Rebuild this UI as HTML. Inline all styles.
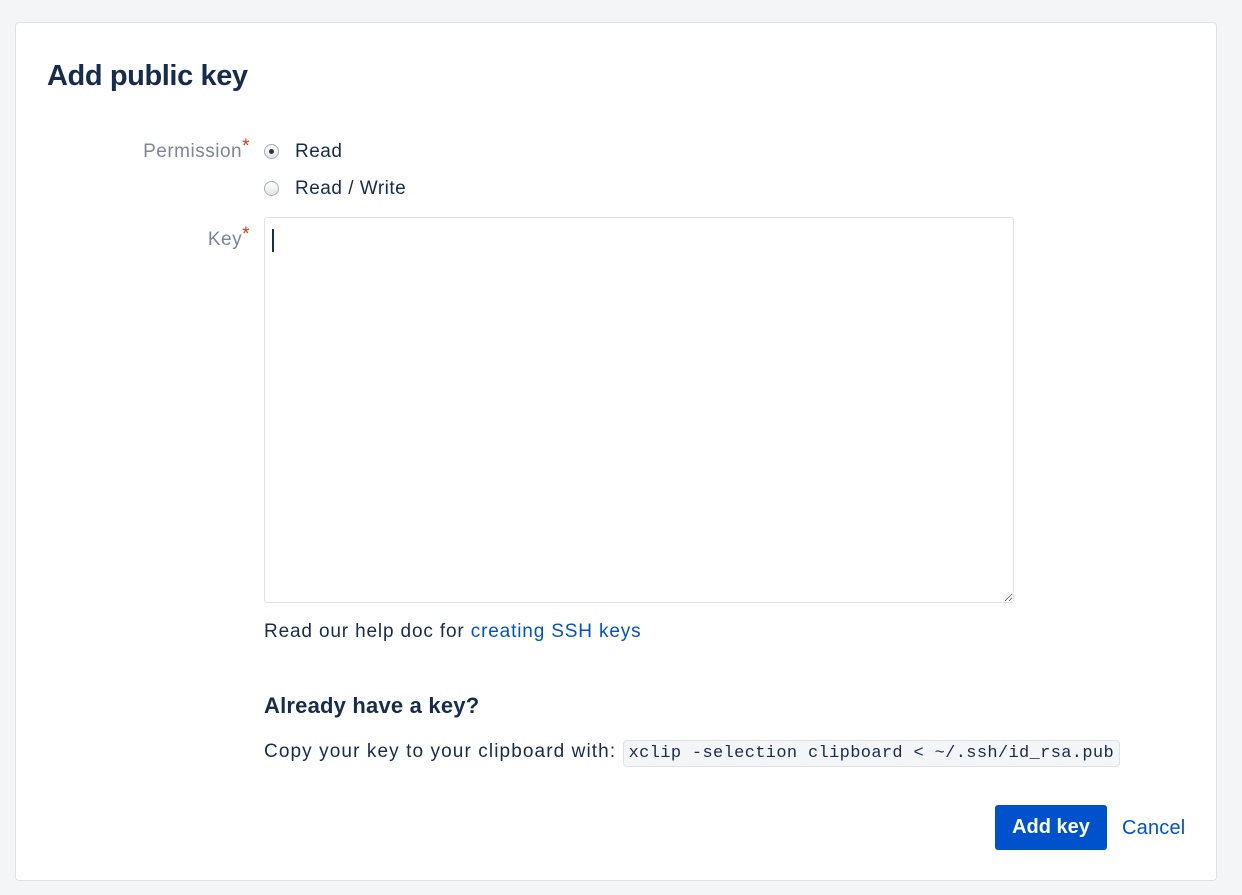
<!DOCTYPE html>
<html><head><style>
body{margin:0;background:#f4f5f7;width:1242px;height:895px;position:relative;font-family:"Liberation Sans",sans-serif;color:#172b4d;overflow:hidden}
.card{position:absolute;left:15px;top:22px;width:1200px;height:857px;background:#fff;border:1px solid #dfe1e6;border-radius:4px}
.abs{position:absolute;white-space:nowrap}
h1{position:absolute;left:31px;top:37px;margin:0;font-size:29px;font-weight:bold;color:#172b4d;letter-spacing:-0.4px}
.lbl{color:#7a869a;font-size:19px;text-align:right;letter-spacing:0.5px}
.req{color:#de350b}
.radio{position:absolute;width:13px;height:13px;border:1px solid #a5adba;border-radius:50%;background:linear-gradient(#fff,#e4e4e4)}
.dot{position:absolute;left:4px;top:4px;width:5px;height:5px;border-radius:50%;background:#333}
.t{font-size:19px;letter-spacing:0.5px}
textarea{position:absolute;left:248px;top:194px;width:750px;height:386px;border:1px solid #dfe1e6;border-radius:3px;resize:both;margin:0;padding:0;box-sizing:border-box}
.caret{position:absolute;left:256px;top:206px;width:2px;height:23px;background:#172b4d}
code{font-family:"Liberation Mono",monospace;font-size:17px;letter-spacing:0.35px;background:#f4f5f7;border:1px solid #dfe1e6;border-radius:4px;padding:3px 5px}
.btn{position:absolute;left:979px;top:782px;width:112px;height:45px;background:#0052cc;border-radius:3px;color:#fff;font-weight:bold;font-size:20px;text-align:center;line-height:45px}
a{color:#0052cc;text-decoration:none}
</style></head><body>
<div class="card">
<h1>Add public key</h1>
<div class="abs lbl" style="right:966px;top:118px">Permission<span class="req" style="position:relative;top:-5px">*</span></div>
<div class="radio" style="left:248px;top:121px"><div class="dot"></div></div>
<div class="abs t" style="left:279px;top:118px">Read</div>
<div class="radio" style="left:248px;top:158px"></div>
<div class="abs t" style="left:279px;top:155px">Read / Write</div>
<div class="abs lbl" style="right:966px;top:206px">Key<span class="req" style="position:relative;top:-5px">*</span></div>
<textarea></textarea>
<div class="caret"></div>
<div class="abs t" style="left:248px;top:598px;letter-spacing:0.85px">Read our help doc for <a>creating SSH keys</a></div>
<div class="abs" style="left:248px;top:670px;font-size:22px;font-weight:bold;letter-spacing:0.2px">Already have a key?</div>
<div class="abs t" style="left:248px;top:718px;letter-spacing:1.1px">Copy your key to your clipboard with: <code>xclip -selection clipboard &lt; ~/.ssh/id_rsa.pub</code></div>
<div class="btn">Add key</div>
<div class="abs" style="left:1106px;top:794px;font-size:20px;letter-spacing:0.2px"><a>Cancel</a></div>
</div>
</body></html>
